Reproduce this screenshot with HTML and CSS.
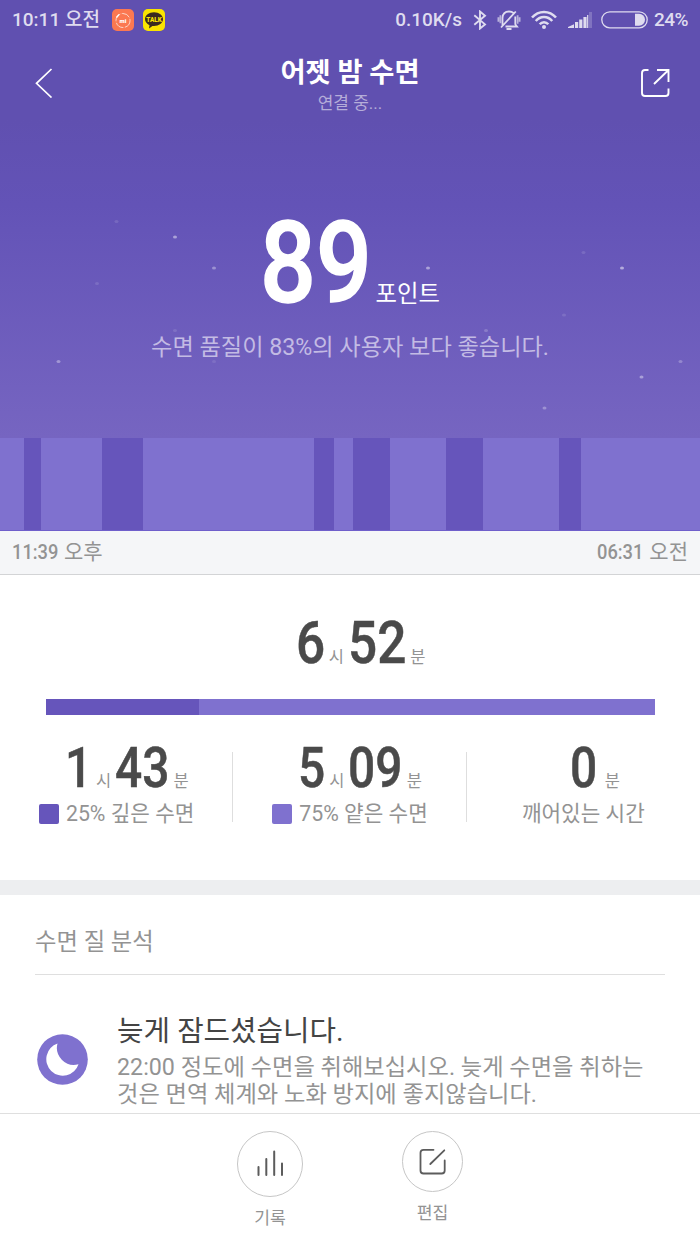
FILE: index.html
```html
<!DOCTYPE html>
<html lang="ko">

<head>
    <meta charset="UTF-8">
    <meta name="viewport" content="width=device-width, initial-scale=1.0">
    <title>어젯 밤 수면</title>
    <link rel="stylesheet" href="styles.css">
</head>

<body>
    <header class="hero">
        <svg class="stars" width="700" height="438" viewBox="0 0 700 438" fill="#fff">
            <ellipse cx="175" cy="237" rx="2" ry="1.6" opacity=".45" />
            <ellipse cx="214" cy="268" rx="2" ry="1.6" opacity=".35" />
            <ellipse cx="116.500" cy="221.500" rx="2" ry="1.6" opacity=".12" />
            <ellipse cx="97" cy="283.500" rx="2" ry="1.6" opacity=".12" />
            <ellipse cx="175" cy="330.500" rx="2" ry="1.6" opacity=".12" />
            <ellipse cx="58.500" cy="361.500" rx="2" ry="1.6" opacity=".35" />
            <ellipse cx="214" cy="361.500" rx="2" ry="1.6" opacity=".1" />
            <ellipse cx="428" cy="268" rx="2" ry="1.6" opacity=".45" />
            <ellipse cx="583.500" cy="252.500" rx="2" ry="1.6" opacity=".12" />
            <ellipse cx="622" cy="268" rx="2" ry="1.6" opacity=".5" />
            <ellipse cx="564" cy="315" rx="2" ry="1.6" opacity=".12" />
            <ellipse cx="486" cy="330.500" rx="2" ry="1.6" opacity=".2" />
            <ellipse cx="680.500" cy="361.500" rx="2" ry="1.6" opacity=".25" />
            <ellipse cx="641.500" cy="377" rx="2" ry="1.6" opacity=".4" />
            <ellipse cx="544.500" cy="408" rx="2" ry="1.6" opacity=".3" />
        </svg>

        <div class="status">
            <span class="clock">10:11 오전</span>
            <svg class="app-mi" width="22" height="22" viewBox="0 0 22 22">
                <rect width="22" height="22" rx="5" fill="#fb7851" />
                <circle cx="11" cy="11.500" r="7" fill="none" stroke="#fde0d4" stroke-width=".9" stroke-dasharray="9 1.500" />
                <path d="M4.500 8.500 7 5.500" stroke="#fff" stroke-width="1.300" />
                <text x="11" y="13.500" class="mi-text">mi</text>
            </svg>
            <svg class="app-talk" width="22" height="22" viewBox="0 0 22 22">
                <rect width="22" height="22" rx="5" fill="#fae400" />
                <path d="M11 3.200c5 0 9 3 9 6.900s-4 7-9 7l-1.600-.1L6 19.500l.5-3.300C3.800 15 2 12.800 2 10.100 2 6.200 6 3.200 11 3.200z" fill="#3a2a20" />
                <text x="11" y="12.600" class="talk-text">TALK</text>
            </svg>

            <span class="speed">0.10K/s</span>
            <svg class="bt" width="14" height="20" viewBox="0 0 14 20" fill="none" stroke="#dfdcef" stroke-width="1.900">
                <path d="M1.300 5.300 12 14.400 7 18.500V1.500l5 4.200L1.300 14.800" />
            </svg>
            <svg class="bell" width="24" height="22" viewBox="0 0 24 22" fill="none" stroke="#dfdcef" stroke-width="1.800">
                <path d="M5.500 16.500V9c0-4 2.500-6.500 6.500-6.500 2 0 3.500.6 4.600 1.700M18.300 7.500v7.800l1.700 2.200H8.500M4 18.500 18.800 2.500" />
                <path d="M9.500 20h5" stroke-width="2" />
                <path d="M1.400 8.200v4.600M22.600 8.200v4.600M3.400 6.200v8M20.600 6.200v8.500" stroke-width="1.800" opacity=".7" />
            </svg>
            <svg class="wifi" width="26" height="20" viewBox="0 0 26 20" fill="none" stroke="#dfdcef" stroke-width="2.500">
                <path d="M1 7.500C7.500 0 18.500 0 25 7.500M4.800 11c4.500-5.300 11.900-5.300 16.400 0M8.700 14.300c2.400-2.800 6.200-2.800 8.600 0" />
                <circle cx="13" cy="17" r="2" fill="#dfdcef" stroke="none" />
            </svg>
            <svg class="signal" width="24" height="16" viewBox="0 0 24 16" fill="#dfdcef">
                <path d="M0 16v-1l6-2.700V16zM7 10h3.200v6H7zM11.200 7.500h3.200V16h-3.200zM15.400 5h3.200v11h-3.200zM19.100 3h1.200v13h-1.200z" />
                <path d="M21 0h3v16h-3z" opacity=".25" />
            </svg>
            <svg class="battery" width="48" height="18" viewBox="0 0 48 18">
                <rect x=".8" y=".8" width="45.400" height="16" rx="8" fill="none" stroke="#dfdcef" stroke-width="1.300" />
                <path d="M34 2.800h4a6 6 0 0 1 0 12h-4z" fill="#dfdcef" />
            </svg>
            <span class="percent">24%</span>
        </div>

        <nav class="nav">
            <svg class="back" width="18" height="30" viewBox="0 0 18 30" fill="none" stroke="#fff" stroke-width="1.700">
                <path d="M16.500 1 1.500 15.300 16.500 29.500" />
            </svg>
            <div class="title">
                <h1>어젯 밤 수면</h1>
                <p>연결 중...</p>
            </div>
            <svg class="share" width="30" height="30" viewBox="0 0 30 30" fill="none" stroke="#fff" stroke-width="1.900">
                <path d="M8.500 2H5Q2 2 2 5V25Q2 28 5 28H25.500Q28.500 28 28.500 25V20.500" />
                <path d="M17 2H28.500V14M28 2.500 14 16" />
            </svg>
        </nav>

        <div class="score"><span class="num">89</span><span class="point">포인트</span></div>
        <p class="rank">수면 품질이 83%의 사용자 보다 좋습니다.</p>
    </header>

    <div class="timeline">
        <i class="deep"></i><i class="deep"></i><i class="deep"></i><i class="deep"></i><i class="deep"></i><i class="deep"></i>
    </div>
    <div class="range">
        <span><b class="time">11:39</b>오후</span>
        <span><b class="time">06:31</b>오전</span>
    </div>

    <main>
        <section class="summary">
            <div class="duration total"><span class="num one">6</span><small>시</small><span class="num">52</span><small>분</small></div>
            <div class="ratio"><i></i></div>
            <div class="stats">
                <div class="stat">
                    <div class="duration"><span class="num one">1</span><small>시</small><span class="num">43</span><small>분</small></div>
                    <p><i class="key dark"></i>25% 깊은 수면</p>
                </div>
                <div class="stat">
                    <div class="duration"><span class="num one">5</span><small>시</small><span class="num">09</span><small>분</small></div>
                    <p><i class="key"></i>75% 얕은 수면</p>
                </div>
                <div class="stat awake">
                    <div class="duration"><span class="num one">0</span><small>분</small></div>
                    <p>깨어있는 시간</p>
                </div>
            </div>
        </section>

        <section class="analysis">
            <h2>수면 질 분석</h2>
            <div class="advice">
                <svg class="moon" width="51" height="51" viewBox="0 0 51 51">
                    <circle cx="25.500" cy="25.500" r="25.300" fill="#7f71cf" />
                    <path d="M20.500 9.500A16.500 16.500 0 1 0 41.500 30.200A17 17 0 0 1 20.500 9.500z" fill="#fff" />
                </svg>
                <div>
                    <h3>늦게 잠드셨습니다.</h3>
                    <p>22:00 정도에 수면을 취해보십시오. 늦게 수면을 취하는<br>것은 면역 체계와 노화 방지에 좋지않습니다.</p>
                </div>
            </div>
        </section>
    </main>

    <footer>
        <div class="action">
            <svg width="66" height="66" viewBox="0 0 66 66" fill="none">
                <circle cx="33" cy="33" r="32.500" stroke="#c6c6c6" />
                <path d="M21.500 36v8M29.300 28v16M37.200 20.500V44M45 32.500V44" stroke="#5c5c5c" stroke-width="2" stroke-linecap="round" />
            </svg>
            <span>기록</span>
        </div>
        <div class="action edit">
            <svg width="61" height="61" viewBox="0 0 61 61" fill="none">
                <circle cx="30.500" cy="30.500" r="30" stroke="#c6c6c6" />
                <path d="M31.500 18.800H21.500Q18.500 18.800 18.500 21.800V39.500Q18.500 42.500 21.500 42.500H39.700Q42.700 42.500 42.700 39.500V29.500M42.300 19.300 28.300 33" stroke="#5c5c5c" stroke-width="1.800" stroke-linecap="round" />
            </svg>
            <span>편집</span>
        </div>
    </footer>
</body>

</html>
```

FILE: styles.css
```css
* {
    box-sizing: border-box;
}

body {
    margin: 0;
    width: 700px;
    height: 1244px;
    overflow: hidden;
    display: flex;
    flex-direction: column;
    background-color: #fff;
    color: #939393;
    font-family: Roboto, "Noto Sans CJK KR", sans-serif;
}

h1, h2, h3, p {
    margin: 0;
    font-weight: 400;
}

svg {
    display: block;
    flex: none;
}

/* narrow numerals */
.num {
    display: inline-block;
    font-weight: 500;
    transform: scaleX(0.87);
    transform-origin: left;
    margin-right: -0.15em;
    -webkit-text-stroke: 0.5px;
}

.num.one {
    margin-right: -0.075em;
}

.hero {
    position: relative;
    height: 438px;
    flex: none;
    background: linear-gradient(#6050b0 0, #6050b0 120px, #6353b7 205px, #7665c1 100%);
    color: #fff;
}

.stars {
    position: absolute;
    top: 0;
    left: 0;
}

.status {
    height: 40px;
    display: flex;
    align-items: center;
    padding: 0 12px;
    color: #dfdcef;
    font-size: 19px;
    font-weight: 500;
    line-height: 22px;
    white-space: nowrap;
}

.clock {
    width: 100px;
}

.app-talk {
    margin-left: 9px;
}

.speed {
    margin-left: auto;
}

.bt {
    margin-left: 11px;
}

.bell {
    margin-left: 10px;
}

.wifi {
    margin-left: 10px;
}

.signal {
    margin-left: 11px;
}

.battery {
    margin-left: 9px;
}

.percent {
    width: 34px;
    margin-left: 5px;
    letter-spacing: -0.5px;
}

.mi-text {
    font-size: 6px;
    font-weight: 900;
    text-anchor: middle;
    fill: #fff;
}

.talk-text {
    font-size: 6.3px;
    font-weight: 900;
    text-anchor: middle;
    fill: #fae400;
}

.nav {
    display: flex;
    justify-content: space-between;
    padding: 15px 30px 0 35px;
    height: 90px;
}

.nav .back,
.nav .share {
    margin-top: 13px;
}

.title {
    text-align: center;
    padding-left: 7px;
}

.title h1 {
    font-size: 27.3px;
    font-weight: 700;
    line-height: 36px;
}

.title p {
    margin-top: 1px;
    font-size: 17px;
    line-height: 22px;
    color: #b5add9;
}

.score {
    display: flex;
    align-items: baseline;
    justify-content: center;
    height: 120px;
    margin-top: 74px;
    line-height: 120px;
}

.score .num {
    font-size: 113px;
    -webkit-text-stroke: 1.5px;
}

.point {
    font-size: 23.3px;
    margin-left: 4px;
}

.rank {
    margin-top: 7px;
    font-size: 23.2px;
    line-height: 32px;
    text-align: center;
    color: #c3bbe4;
}

/* night timeline, deep sleep over light sleep */
.timeline {
    display: flex;
    flex: none;
    height: 93px;
    background-color: #7f71cf;
    border-bottom: 1px solid #6f5fcb;
}

.deep {
    width: 17px;
    margin-left: 24px;
    background-color: #6655bb;
}

.deep:nth-child(2) {
    width: 41px;
    margin-left: 61px;
}

.deep:nth-child(3) {
    width: 20px;
    margin-left: 171px;
}

.deep:nth-child(4) {
    width: 37px;
    margin-left: 19px;
}

.deep:nth-child(5) {
    width: 37px;
    margin-left: 56px;
}

.deep:nth-child(6) {
    width: 22px;
    margin-left: 76px;
}

.range {
    display: flex;
    flex: none;
    justify-content: space-between;
    height: 44px;
    padding: 0 12px;
    border-bottom: 1px solid #d3d4d6;
    background-color: #f5f6f8;
    font-size: 21px;
    line-height: 43px;
}

.time {
    display: inline-block;
    width: 52px;
    font-weight: 500;
    transform: scaleX(0.87);
    transform-origin: left;
}

.summary {
    height: 320px;
    padding: 33px 45px 0 46px;
    border-bottom: 15px solid #edeef0;
}

.duration {
    display: flex;
    align-items: baseline;
    justify-content: center;
    height: 70px;
    color: #4a4a4a;
    font-size: 55px;
    line-height: 70px;
}

.duration.total {
    font-size: 59px;
    padding-left: 20px;
}

.duration small {
    margin: 0 4px;
    font-size: 16.5px;
    color: #939393;
}

.duration small:last-child {
    margin-right: 0;
}

.ratio {
    height: 16px;
    margin-top: 21px;
    background-color: #7f71cf;
}

.ratio i {
    display: block;
    width: 153px;
    height: 16px;
    background-color: #6655bb;
}

.stats {
    display: flex;
    margin: 18px -45px 0 -46px;
}

.stat {
    width: 233.5px;
    height: 92px;
    background: linear-gradient(#dedede, #dedede) right 19px / 1px 70px no-repeat;
}

.stat .duration {
    padding-left: 20px;
}

.stat.awake .duration {
    padding-left: 23px;
}

.awake small {
    margin-left: 8px;
}

.stat:last-child {
    background: none;
}

.stat p {
    display: flex;
    align-items: center;
    justify-content: center;
    margin-top: -1px;
    font-size: 21.3px;
    line-height: 24px;
}

.key {
    width: 20px;
    height: 20px;
    margin-right: 7px;
    border-radius: 2px;
    background-color: #7f71cf;
}

.key.dark {
    background-color: #6655bb;
}

.analysis {
    padding: 30px 35px 0;
}

.analysis h2 {
    height: 50px;
    border-bottom: 1px solid #dfdfdf;
    font-size: 23.3px;
    line-height: 34px;
}

.advice {
    display: flex;
    padding: 37px 0 0 2px;
}

.moon {
    margin: 22px 29px 0 0;
}

.advice h3 {
    font-size: 28.8px;
    line-height: 38px;
    color: #444;
}

.advice p {
    margin-top: 4px;
    font-size: 23.25px;
    line-height: 27px;
    white-space: nowrap;
}

footer {
    display: flex;
    flex: none;
    justify-content: center;
    gap: 99px;
    height: 131px;
    margin-top: auto;
    padding-top: 17px;
    border-top: 1px solid #dfdfdf;
    background-color: #fff;
}

.action {
    display: flex;
    flex-direction: column;
    align-items: center;
    font-size: 17.2px;
    line-height: 20px;
}

.action span {
    margin-top: 11px;
}
```
